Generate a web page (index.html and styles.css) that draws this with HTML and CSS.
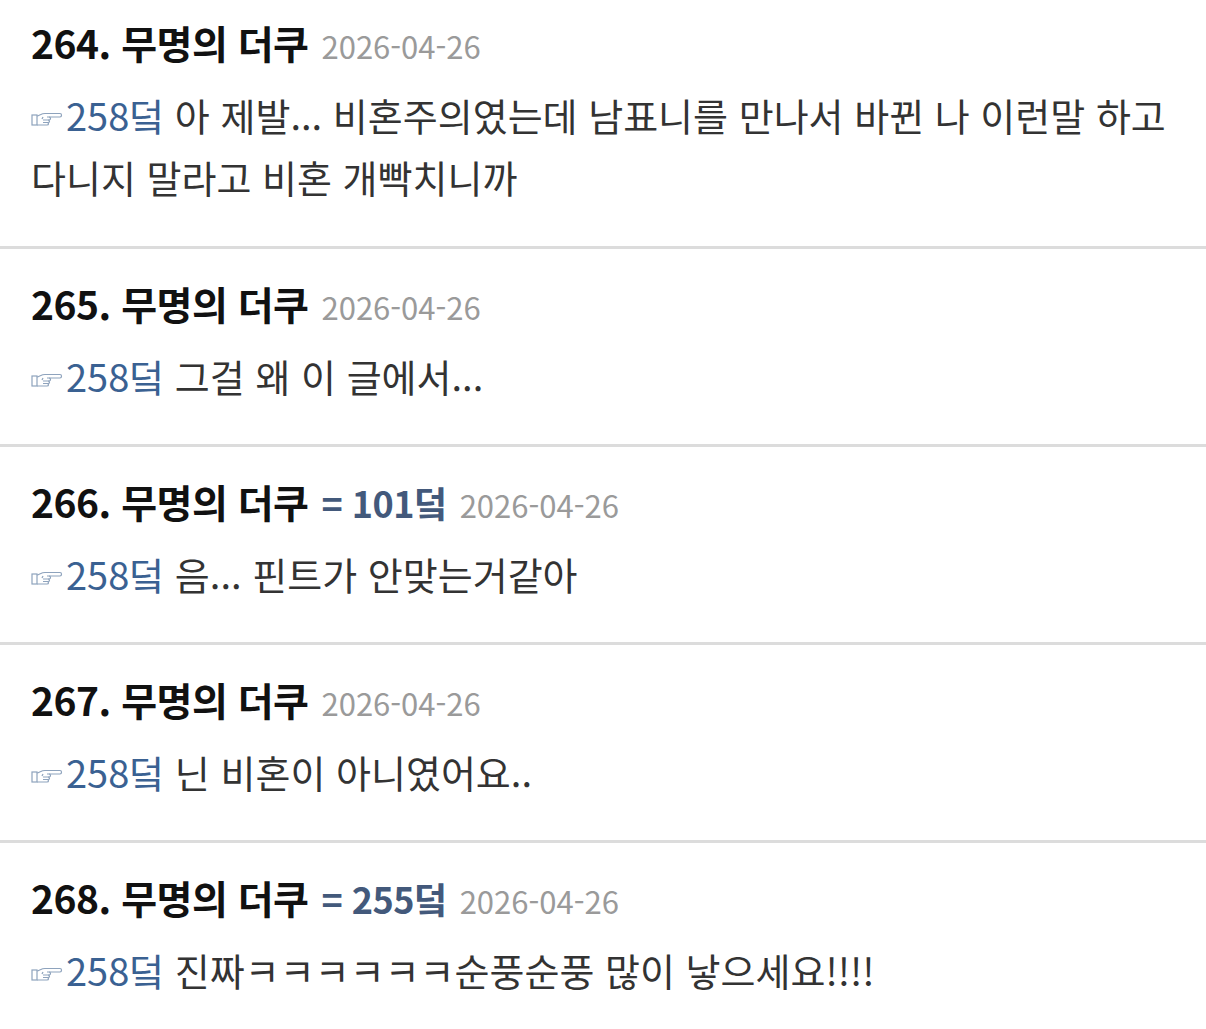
FILE: index.html
```html
<!DOCTYPE html>
<html lang="ko">
<head>
    <meta charset="UTF-8">
    <meta name="viewport" content="width=device-width, initial-scale=1.0">
    <title>댓글</title>
    <link rel="stylesheet" href="styles.css">
</head>
<body>
    <ul class="comment-list">
        <li class="comment">
            <div class="comment-head">
                <span class="comment-name">264. 무명의 더쿠</span>
                <span class="comment-date">2026-04-26</span>
            </div>
            <p class="comment-body"><span class="reply-to"><svg class="hand" width="32" height="16" viewBox="0 0 32 16"><rect x="1" y="4" width="5" height="10"/><path d="M6 5 C9 4 11 2.5 14 2.5 L29 2.5 C31 2.5 31 6 29 6 L16 6"/><path d="M18 6 C20 6 20 9 18 9 L12 9"/><path d="M17 9 C19 9 19 11.5 17 11.5 L12 11.5"/><path d="M16 11.5 C18 11.5 18 14 16 14 L6 14"/><path d="M12 6 L11 8"/></svg>258덬</span> 아 제발... 비혼주의였는데 남표니를 만나서 바뀐 나 이런말 하고 다니지 말라고 비혼 개빡치니까</p>
        </li>
        <li class="comment">
            <div class="comment-head">
                <span class="comment-name">265. 무명의 더쿠</span>
                <span class="comment-date">2026-04-26</span>
            </div>
            <p class="comment-body"><span class="reply-to"><svg class="hand" width="32" height="16" viewBox="0 0 32 16"><rect x="1" y="4" width="5" height="10"/><path d="M6 5 C9 4 11 2.5 14 2.5 L29 2.5 C31 2.5 31 6 29 6 L16 6"/><path d="M18 6 C20 6 20 9 18 9 L12 9"/><path d="M17 9 C19 9 19 11.5 17 11.5 L12 11.5"/><path d="M16 11.5 C18 11.5 18 14 16 14 L6 14"/><path d="M12 6 L11 8"/></svg>258덬</span> 그걸 왜 이 글에서...</p>
        </li>
        <li class="comment">
            <div class="comment-head">
                <span class="comment-name">266. 무명의 더쿠</span>
                <span class="comment-same">= 101덬</span>
                <span class="comment-date">2026-04-26</span>
            </div>
            <p class="comment-body"><span class="reply-to"><svg class="hand" width="32" height="16" viewBox="0 0 32 16"><rect x="1" y="4" width="5" height="10"/><path d="M6 5 C9 4 11 2.5 14 2.5 L29 2.5 C31 2.5 31 6 29 6 L16 6"/><path d="M18 6 C20 6 20 9 18 9 L12 9"/><path d="M17 9 C19 9 19 11.5 17 11.5 L12 11.5"/><path d="M16 11.5 C18 11.5 18 14 16 14 L6 14"/><path d="M12 6 L11 8"/></svg>258덬</span> 음... 핀트가 안맞는거같아</p>
        </li>
        <li class="comment">
            <div class="comment-head">
                <span class="comment-name">267. 무명의 더쿠</span>
                <span class="comment-date">2026-04-26</span>
            </div>
            <p class="comment-body"><span class="reply-to"><svg class="hand" width="32" height="16" viewBox="0 0 32 16"><rect x="1" y="4" width="5" height="10"/><path d="M6 5 C9 4 11 2.5 14 2.5 L29 2.5 C31 2.5 31 6 29 6 L16 6"/><path d="M18 6 C20 6 20 9 18 9 L12 9"/><path d="M17 9 C19 9 19 11.5 17 11.5 L12 11.5"/><path d="M16 11.5 C18 11.5 18 14 16 14 L6 14"/><path d="M12 6 L11 8"/></svg>258덬</span> 닌 비혼이 아니였어요..</p>
        </li>
        <li class="comment">
            <div class="comment-head">
                <span class="comment-name">268. 무명의 더쿠</span>
                <span class="comment-same">= 255덬</span>
                <span class="comment-date">2026-04-26</span>
            </div>
            <p class="comment-body"><span class="reply-to"><svg class="hand" width="32" height="16" viewBox="0 0 32 16"><rect x="1" y="4" width="5" height="10"/><path d="M6 5 C9 4 11 2.5 14 2.5 L29 2.5 C31 2.5 31 6 29 6 L16 6"/><path d="M18 6 C20 6 20 9 18 9 L12 9"/><path d="M17 9 C19 9 19 11.5 17 11.5 L12 11.5"/><path d="M16 11.5 C18 11.5 18 14 16 14 L6 14"/><path d="M12 6 L11 8"/></svg>258덬</span> 진짜ㅋㅋㅋㅋㅋㅋ순풍순풍 많이 낳으세요!!!!</p>
        </li>
    </ul>
</body>
</html>
```

FILE: styles.css
```css
body {
    margin: 0;
    background: #fff;
    font-family: "Noto Sans CJK KR", "Noto Sans", sans-serif;
    color: #333;
}
.comment-list {
    list-style: none;
    margin: 0;
    padding: 0;
}
.comment {
    padding: 23px 31px 37px 31px;
    border-bottom: 3px solid #dcdcdc;
}
.comment:first-child {
    padding-top: 11px;
    padding-bottom: 38px;
}
.comment:last-child {
    border-bottom: none;
}
.comment-head {
    display: flex;
    align-items: baseline;
    gap: 13px;
    height: 62px;
    line-height: 62px;
    white-space: nowrap;
}
.comment-name {
    font-size: 39px;
    font-weight: 700;
    color: #111;
    letter-spacing: -0.5px;
}
.comment-same {
    font-size: 36px;
    font-weight: 700;
    color: #43597b;
    letter-spacing: -0.5px;
}
.comment-date {
    font-size: 31px;
    color: #9a9a9a;
}
.comment-body {
    margin: 11px 0 0 0;
    font-size: 38px;
    line-height: 62px;
    color: #333;
}
.reply-to {
    color: #3a6192;
}
.hand {
    vertical-align: middle;
    margin-top: -4px;
    margin-right: 3px;
    fill: none;
    stroke: #8ea3bd;
    stroke-width: 1.2;
}
```
